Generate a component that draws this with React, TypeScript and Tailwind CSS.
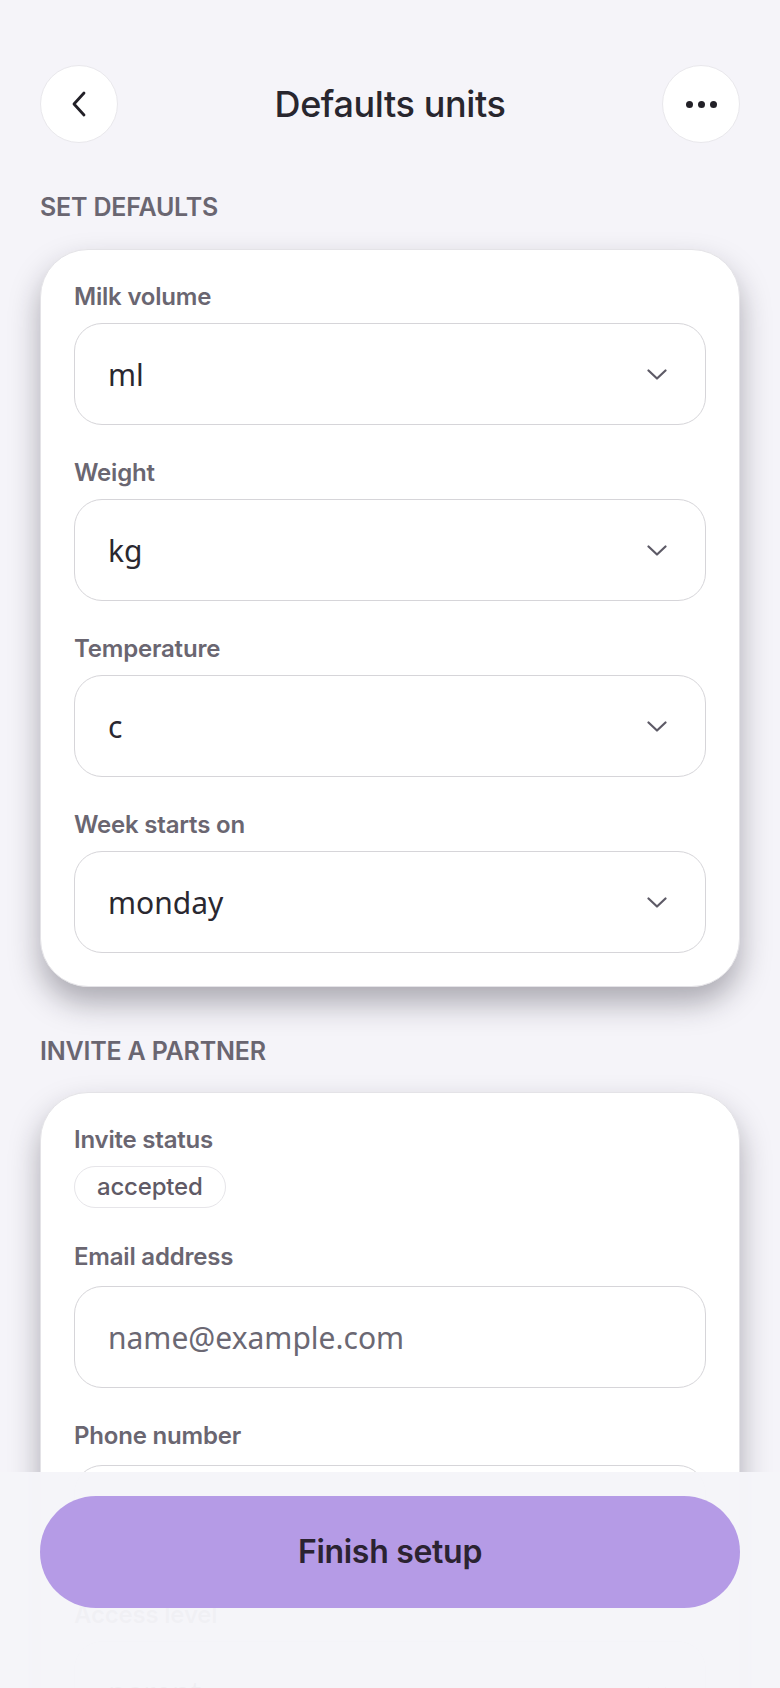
const unitFields = [
  { label: "Milk volume", value: "ml" },
  { label: "Weight", value: "kg" },
  { label: "Temperature", value: "c" },
  { label: "Week starts on", value: "monday" },
];

function Chevron() {
  return (
    <svg width="20" height="11" viewBox="0 0 20 11" fill="none" className="shrink-0">
      <path d="M1.5 1.5 L10 9.5 L18.5 1.5" stroke="#5d5a66" strokeWidth="2.2" strokeLinecap="round" strokeLinejoin="round" />
    </svg>
  );
}

function BackArrow() {
  return (
    <svg width="16" height="26" viewBox="0 0 16 26" fill="none">
      <path d="M13 2 L3 13 L13 24" stroke="#222027" strokeWidth="2.8" strokeLinecap="round" strokeLinejoin="round" />
    </svg>
  );
}

function FieldLabel({ children }: { children: React.ReactNode }) {
  return <div className="text-[24px] leading-[28px] font-semibold text-[#6a6671] tracking-[-0.2px]">{children}</div>;
}

function SelectBox({ value }: { value: string }) {
  return (
    <div className="h-[102px] rounded-[28px] border border-[#d6d5d9] bg-white pl-[33px] pr-[38px] flex items-center justify-between">
      <span className="font-['Noto_Sans',sans-serif] text-[30px] text-[#2a2830]">{value}</span>
      <Chevron />
    </div>
  );
}

function InputBox({ placeholder }: { placeholder: string }) {
  return (
    <div className="h-[102px] rounded-[28px] border border-[#d6d5d9] bg-white px-[33px] flex items-center">
      <span className="font-['Noto_Sans',sans-serif] text-[30px] text-[#6b6873]">{placeholder}</span>
    </div>
  );
}

function SectionTitle({ children }: { children: React.ReactNode }) {
  return <h2 className="text-[25px] leading-[28px] font-semibold uppercase text-[#6a6671] tracking-[-0.2px]">{children}</h2>;
}

const cardClass =
  "rounded-[48px] border border-[#e4e3e7] bg-white p-[33px] shadow-[0_16px_30px_rgba(30,25,40,0.34)] flex flex-col gap-[34px]";

export default function App() {
  return (
    <div className="relative h-[1688px] overflow-hidden bg-[#f5f4f9] font-['Inter',sans-serif]">
      <div className="px-10 pt-[65px]">
        {/* top bar */}
        <header className="flex items-center justify-between h-[78px]">
          <button className="size-[78px] rounded-full bg-white border border-[#e9e8ec] flex items-center justify-center">
            <BackArrow />
          </button>
          <h1 className="text-[36px] font-medium text-[#28262e] tracking-[-0.4px]">Defaults units</h1>
          <button className="size-[78px] rounded-full bg-white border border-[#e9e8ec] flex items-center justify-center gap-[5px]">
            <span className="size-[7px] rounded-full bg-[#222027]" />
            <span className="size-[7px] rounded-full bg-[#222027]" />
            <span className="size-[7px] rounded-full bg-[#222027]" />
          </button>
        </header>

        <section className="mt-[50px]">
          <SectionTitle>Set defaults</SectionTitle>
          <div className={`mt-[28px] ${cardClass}`}>
            {unitFields.map((f) => (
              <div key={f.label} className="flex flex-col gap-3">
                <FieldLabel>{f.label}</FieldLabel>
                <SelectBox value={f.value} />
              </div>
            ))}
          </div>
        </section>

        <section className="mt-[50px]">
          <SectionTitle>Invite a partner</SectionTitle>
          <div className={`mt-[27px] ${cardClass}`}>
            <div className="flex flex-col gap-3 items-start">
              <FieldLabel>Invite status</FieldLabel>
              <span className="h-[42px] px-[22px] rounded-full border border-[#e6e5e9] flex items-center text-[24px] font-medium text-[#5f5a66] tracking-[-0.2px]">
                accepted
              </span>
            </div>
            <div className="flex flex-col gap-[15px] pt-[1px]">
              <FieldLabel>Email address</FieldLabel>
              <InputBox placeholder="name@example.com" />
            </div>
            <div className="flex flex-col gap-[15px]">
              <FieldLabel>Phone number</FieldLabel>
              <InputBox placeholder="+1 555 000 0000" />
            </div>
            <div className="flex flex-col gap-3">
              <FieldLabel>Access level</FieldLabel>
              <SelectBox value="parent" />
            </div>
          </div>
        </section>
      </div>

      {/* sticky footer */}
      <div className="absolute inset-x-0 bottom-0 h-[216px] bg-[#f5f5f9]/[0.97] px-10 pt-6">
        <button className="w-full h-[112px] rounded-full bg-[#b59be6] text-[32px] font-semibold text-[#2b2331] tracking-[-0.3px]">
          Finish setup
        </button>
      </div>
    </div>
  );
}
